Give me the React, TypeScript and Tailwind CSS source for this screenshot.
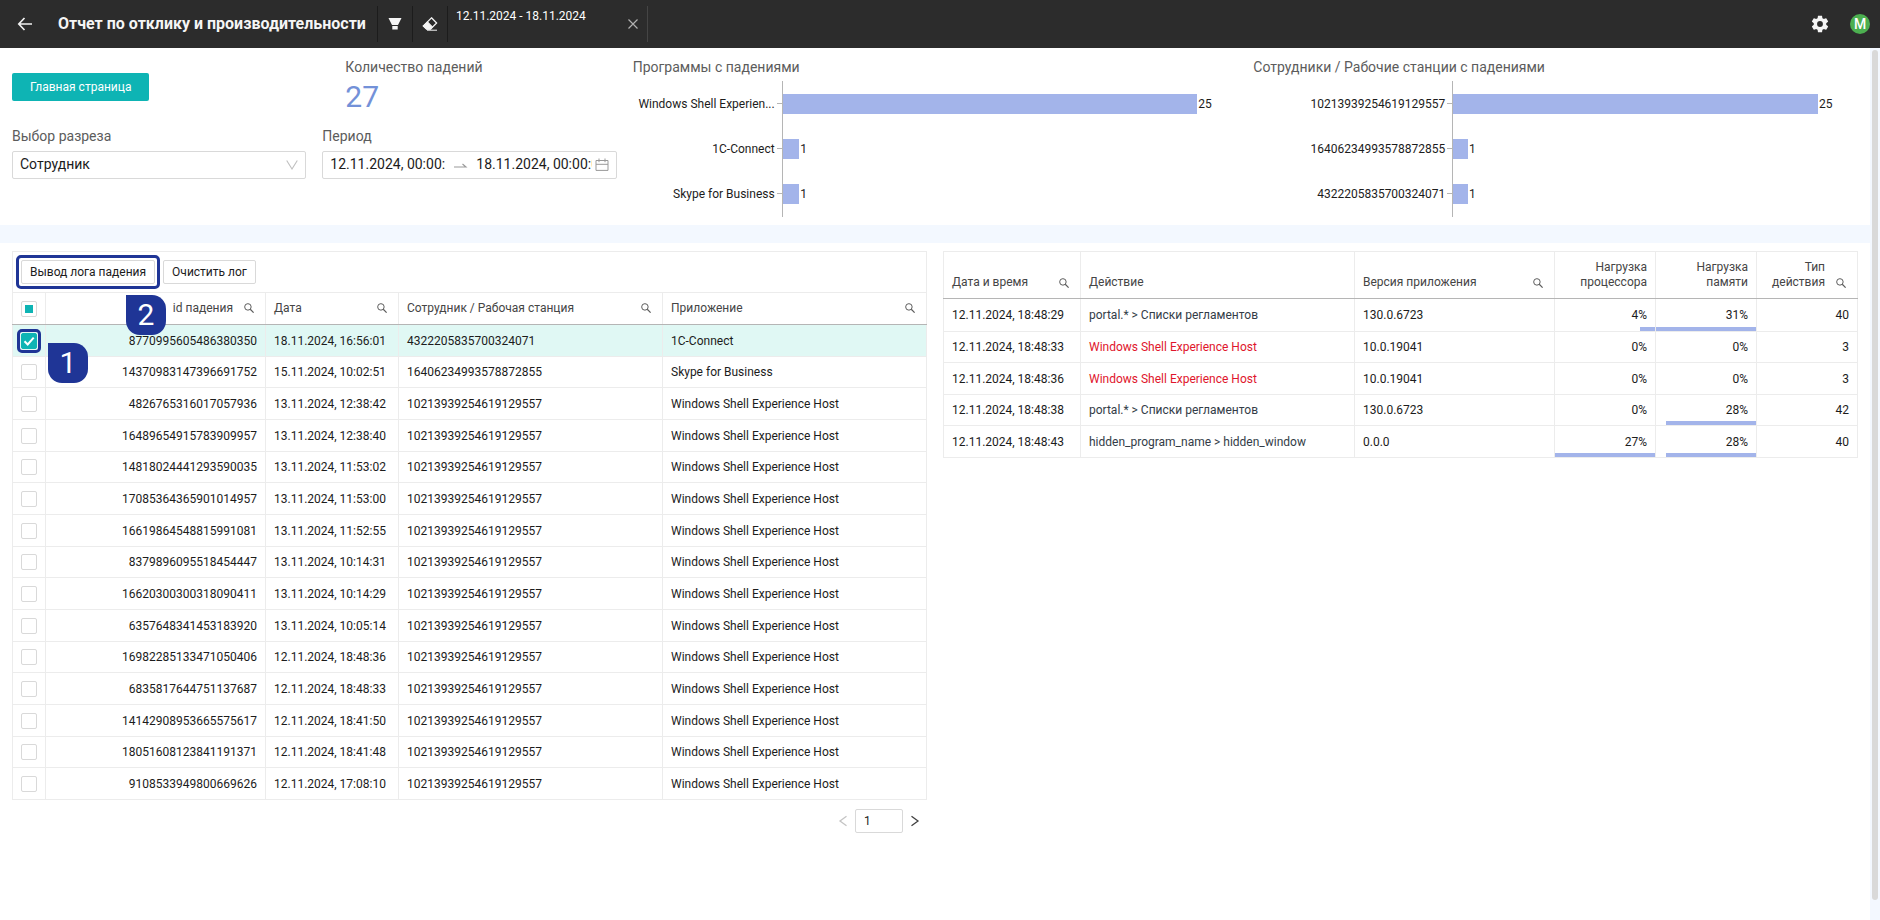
import React from "react";

const crashes = [
  ["8770995605486380350", "18.11.2024, 16:56:01", "4322205835700324071", "1C-Connect"],
  ["14370983147396691752", "15.11.2024, 10:02:51", "16406234993578872855", "Skype for Business"],
  ["4826765316017057936", "13.11.2024, 12:38:42", "10213939254619129557", "Windows Shell Experience Host"],
  ["16489654915783909957", "13.11.2024, 12:38:40", "10213939254619129557", "Windows Shell Experience Host"],
  ["14818024441293590035", "13.11.2024, 11:53:02", "10213939254619129557", "Windows Shell Experience Host"],
  ["17085364365901014957", "13.11.2024, 11:53:00", "10213939254619129557", "Windows Shell Experience Host"],
  ["16619864548815991081", "13.11.2024, 11:52:55", "10213939254619129557", "Windows Shell Experience Host"],
  ["8379896095518454447", "13.11.2024, 10:14:31", "10213939254619129557", "Windows Shell Experience Host"],
  ["16620300300318090411", "13.11.2024, 10:14:29", "10213939254619129557", "Windows Shell Experience Host"],
  ["6357648341453183920", "13.11.2024, 10:05:14", "10213939254619129557", "Windows Shell Experience Host"],
  ["16982285133471050406", "12.11.2024, 18:48:36", "10213939254619129557", "Windows Shell Experience Host"],
  ["6835817644751137687", "12.11.2024, 18:48:33", "10213939254619129557", "Windows Shell Experience Host"],
  ["14142908953665575617", "12.11.2024, 18:41:50", "10213939254619129557", "Windows Shell Experience Host"],
  ["18051608123841191371", "12.11.2024, 18:41:48", "10213939254619129557", "Windows Shell Experience Host"],
  ["9108533949800669626", "12.11.2024, 17:08:10", "10213939254619129557", "Windows Shell Experience Host"],
];

const log = [
  { time: "12.11.2024, 18:48:29", action: "portal.* > Списки регламентов", failed: false, version: "130.0.6723", cpu: 4, mem: 31, type: 40 },
  { time: "12.11.2024, 18:48:33", action: "Windows Shell Experience Host", failed: true, version: "10.0.19041", cpu: 0, mem: 0, type: 3 },
  { time: "12.11.2024, 18:48:36", action: "Windows Shell Experience Host", failed: true, version: "10.0.19041", cpu: 0, mem: 0, type: 3 },
  { time: "12.11.2024, 18:48:38", action: "portal.* > Списки регламентов", failed: false, version: "130.0.6723", cpu: 0, mem: 28, type: 42 },
  { time: "12.11.2024, 18:48:43", action: "hidden_program_name > hidden_window", failed: false, version: "0.0.0", cpu: 27, mem: 28, type: 40 },
];

const programs = [
  { label: "Windows Shell Experien...", value: 25 },
  { label: "1C-Connect", value: 1 },
  { label: "Skype for Business", value: 1 },
];

const employees = [
  { label: "10213939254619129557", value: 25 },
  { label: "16406234993578872855", value: 1 },
  { label: "4322205835700324071", value: 1 },
];

function SearchButton({ name }: { name: string }) {
  return (
    <button type="button" aria-label={`Поиск: ${name}`} className="shrink-0">
      <svg viewBox="0 0 12 12" className="size-2.5 fill-none stroke-[#5c5c5c]">
        <circle cx="4.7" cy="4.7" r="3.9" strokeWidth="1.2" />
        <path d="M7.5 7.5 11.6 11.6" strokeWidth="1.4" />
      </svg>
    </button>
  );
}

function BarChart({ title, data, labelClass }: { title: string; data: { label: string; value: number }[]; labelClass: string }) {
  const max = Math.max(...data.map((d) => d.value));
  return (
    <section className="col-span-2 pt-2">
      <h2 className="text-sm leading-[22px] text-[#5c5c5c]">{title}</h2>
      <div className="mt-[3px] flex h-[136px]">
        <ul className={labelClass}>
          {data.map((d) => (
            <li key={d.label} className="flex h-[45px] items-center justify-end gap-0.5">
              <span className="whitespace-nowrap">{d.label}</span>
              <span className="h-px w-[5px] bg-[#b5b5b5]" />
            </li>
          ))}
        </ul>
        <ul className="flex min-w-0 flex-1 flex-col border-l border-[#b5b5b5] pr-10">
          {data.map((d) => (
            <li key={d.label} className="flex h-[45px] shrink-0 items-center gap-px">
              <span className="h-5 shrink-0 bg-[#a3b4ea]" style={{ width: `${(d.value / max) * 100}%` }} />
              <span>{d.value}</span>
            </li>
          ))}
        </ul>
      </div>
    </section>
  );
}

function Load({ value, max }: { value: number; max: number }) {
  return (
    <td className="relative border border-[#ececec] px-2 text-right">
      {value}%
      {value > 0 && <span className="absolute right-0 bottom-0 h-1 bg-[#a3b4ea]" style={{ width: `${(value / max) * 100}%` }} />}
    </td>
  );
}

function Tick({ checked }: { checked: boolean }) {
  return (
    <span className="relative mx-auto block size-4">
      <input
        type="checkbox"
        defaultChecked={checked}
        aria-label="Выбрать строку"
        className="block size-4 appearance-none rounded-[2px] border border-[#d9d9d9] bg-white checked:border-[#0eb4b4] checked:bg-[#0eb4b4]"
      />
      {checked && (
        <>
          <svg viewBox="0 0 16 16" className="pointer-events-none absolute inset-0 size-4 fill-none stroke-white">
            <path d="m3.5 8.2 3.2 3.3 6-6.8" strokeWidth="2" />
          </svg>
          <span className="pointer-events-none absolute -inset-1 rounded-[5px] border-[3px] border-[#1f3596]" />
        </>
      )}
    </span>
  );
}

export default function App() {
  return (
    <div className="flex min-h-screen flex-col bg-white font-['Roboto',sans-serif] text-xs text-[#1c1c1c]">
      <header className="flex h-12 items-center bg-[#2c2c2c] text-white">
        <button type="button" aria-label="Назад" className="ml-[17px]">
          <svg viewBox="0 0 16 16" className="size-4 fill-none stroke-[#f0f0f0]">
            <path d="M15 8H2M7.5 2 1.8 8l5.7 6" strokeWidth="1.7" />
          </svg>
        </button>
        <h1 className="ml-[25px] w-[319px] shrink-0 text-base font-bold whitespace-nowrap text-[#f5f5f5]">
          Отчет по отклику и производительности
        </h1>
        <button type="button" aria-label="Фильтр" className="flex h-9 w-[35px] items-center justify-center border-l border-[#1c1c1c]">
          <svg viewBox="0 0 14 14" className="size-3.5 fill-[#f5f5f5]">
            <path d="M.5 1h13L10 8H4zM4.3 9h5.4v3.6H4.3z" />
          </svg>
        </button>
        <button type="button" aria-label="Очистить фильтр" className="flex h-9 w-[35px] items-center justify-center border-l border-[#1c1c1c]">
          <svg viewBox="0 0 16 16" className="size-4 fill-none stroke-[#f5f5f5]">
            <path d="M9.5 1.8 14.6 7 8.5 13.2H4.6L1.3 9.9z" strokeWidth="1.3" />
            <path d="M5.5 5.8 10.6 11 8.5 13.2H4.6L1.3 9.9zM5 14.2h10" className="fill-[#f5f5f5]" strokeWidth="1" />
          </svg>
        </button>
        <div className="flex h-9 w-[201px] justify-between border-x border-l-[#1c1c1c] border-r-[#454545] px-2">
          <span className="leading-5">12.11.2024 - 18.11.2024</span>
          <button type="button" aria-label="Удалить период">
            <svg viewBox="0 0 12 12" className="size-3 fill-none stroke-[#b0b0b0]">
              <path d="m1.5 1.5 9 9M10.5 1.5l-9 9" strokeWidth="1.2" />
            </svg>
          </button>
        </div>
        <button type="button" aria-label="Настройки" className="ml-auto">
          <svg viewBox="0 0 24 24" className="size-5 fill-[#f5f5f5]">
            <path d="M19.43 12.98c.04-.32.07-.64.07-.98s-.03-.66-.07-.98l2.11-1.65c.19-.15.24-.42.12-.64l-2-3.46c-.12-.22-.39-.3-.61-.22l-2.49 1c-.52-.4-1.08-.73-1.69-.98l-.38-2.65C14.46 2.18 14.25 2 14 2h-4c-.25 0-.46.18-.49.42l-.38 2.65c-.61.25-1.17.59-1.69.98l-2.49-1c-.23-.09-.49 0-.61.22l-2 3.46c-.13.22-.07.49.12.64l2.11 1.65c-.04.32-.07.65-.07.98s.03.66.07.98l-2.11 1.65c-.19.15-.24.42-.12.64l2 3.46c.12.22.39.3.61.22l2.49-1c.52.4 1.08.73 1.69.98l.38 2.65c.03.24.24.42.49.42h4c.25 0 .46-.18.49-.42l.38-2.65c.61-.25 1.17-.59 1.69-.98l2.49 1c.23.09.49 0 .61-.22l2-3.46c.12-.22.07-.49-.12-.64zM12 15.5a3.5 3.5 0 1 1 0-7 3.5 3.5 0 0 1 0 7z" />
          </svg>
        </button>
        <button type="button" aria-label="Профиль" className="mr-2.5 ml-5 flex size-5 items-center justify-center rounded-full bg-[#4caf50] text-sm font-medium">
          M
        </button>
      </header>

      <div className="flex flex-1">
        <main className="min-w-0 flex-1">
          <div className="grid h-[177px] grid-cols-6 gap-4 px-3">
            <div className="col-span-2 grid grid-cols-2 content-start gap-x-4">
              <div className="pt-[25px]">
                <button type="button" className="h-7 rounded-[2px] bg-[#0eb4b4] px-[18px] text-white">Главная страница</button>
              </div>
              <div className="pt-2 pl-[23px]">
                <h2 className="text-sm leading-[22px] text-[#5c5c5c]">Количество падений</h2>
                <p className="pt-0.5 text-[30px] leading-[34px] text-[#7391d8]">27</p>
              </div>
              <div className="pt-3">
                <label htmlFor="slice" className="block text-sm leading-5 text-[#5c5c5c]">Выбор разреза</label>
                <div className="relative mt-[5px]">
                  <select id="slice" className="block h-7 w-full appearance-none rounded-[2px] border border-[#d9d9d9] bg-white px-[7px] pb-0.5 text-sm leading-5">
                    <option>Сотрудник</option>
                  </select>
                  <svg viewBox="0 0 12 12" className="pointer-events-none absolute top-2 right-2 size-3 fill-none stroke-[#bfbfbf]">
                    <path d="m.7 1.5 5.3 8.5 5.3-8.5" strokeWidth="1.1" />
                  </svg>
                </div>
              </div>
              <div className="pt-3">
                <label htmlFor="from" className="block text-sm leading-5 text-[#5c5c5c]">Период</label>
                <div className="mt-[5px] flex h-7 items-center rounded-[2px] border border-[#d9d9d9] px-[7px] pb-0.5 text-sm">
                  <input id="from" defaultValue="12.11.2024, 00:00:00" className="h-5 w-[115px] min-w-0" />
                  <svg viewBox="0 0 16 16" className="mr-2 ml-[7px] size-4 shrink-0 fill-none stroke-[#999]">
                    <path d="M2 11h12L10.5 8" strokeWidth="1.1" />
                  </svg>
                  <input aria-label="Конец периода" defaultValue="18.11.2024, 00:00:00" className="h-5 w-[115px] min-w-0 flex-1" />
                  <svg viewBox="0 0 14 14" className="ml-[3px] size-3.5 shrink-0 fill-none stroke-[#999]">
                    <path d="M1 3.5h12v9.9H1zM1 7.3h12M4 1.5v3.7M10 1.5v3.7" />
                  </svg>
                </div>
              </div>
            </div>
            <BarChart title="Программы с падениями" data={programs} labelClass="flex w-[149px] shrink-0 flex-col" />
            <BarChart title="Сотрудники / Рабочие станции с падениями" data={employees} labelClass="flex w-[199px] shrink-0 flex-col" />
          </div>

          <div className="h-[18px] bg-[#f3f8ff]" />

          <div className="grid grid-cols-2 items-start gap-4 px-3 pt-2">
            <section className="relative">
              <div className="flex h-[41px] items-center gap-2 border border-b-0 border-[#ececec] px-2">
                <div className="relative">
                  <button type="button" className="block h-6 rounded-[2px] border border-[#d9d9d9] px-2">Вывод лога падения</button>
                  <span className="pointer-events-none absolute -inset-[5px] rounded-[5px] border-[3px] border-[#1f3596]" />
                </div>
                <button type="button" className="h-6 rounded-[2px] border border-[#d9d9d9] px-2">Очистить лог</button>
              </div>
              <table className="w-full table-fixed border-collapse">
                <colgroup>
                  <col className="w-[33px]" />
                  <col className="w-[220px]" />
                  <col className="w-[133px]" />
                  <col className="w-[264px]" />
                  <col className="w-[264px]" />
                </colgroup>
                <thead>
                  <tr className="h-8 text-[#454545]">
                    <th className="border border-b-[#b5b5b5] border-[#ececec] p-0">
                      <span className="relative mx-auto block size-4">
                        <input type="checkbox" aria-label="Выбрать все" className="block size-4 appearance-none rounded-[2px] border border-[#d9d9d9] bg-white" />
                        <span className="pointer-events-none absolute inset-1 bg-[#0eb4b4]" />
                      </span>
                    </th>
                    {["id падения", "Дата", "Сотрудник / Рабочая станция", "Приложение"].map((name, i) => (
                      <th key={name} className="border border-b-[#b5b5b5] border-[#ececec] pr-[11px] pb-0.5 pl-2 font-normal">
                        <div className={i === 0 ? "flex items-center justify-end gap-[11px]" : "flex items-center justify-between"}>
                          <span>{name}</span>
                          <SearchButton name={name} />
                        </div>
                      </th>
                    ))}
                  </tr>
                </thead>
                <tbody>
                  {crashes.map((row, i) => (
                    <tr key={row[0]} className={i === 0 ? "h-8 bg-[#e0f8f4]" : "h-8 nth-[3n+2]:h-[31px]"}>
                      <td className="border border-[#ececec] p-0">
                        <Tick checked={i === 0} />
                      </td>
                      <td className="border border-[#ececec] px-2 text-right">{row[0]}</td>
                      <td className="border border-[#ececec] px-2">{row[1]}</td>
                      <td className="border border-[#ececec] px-2">{row[2]}</td>
                      <td className="border border-[#ececec] px-2">{row[3]}</td>
                    </tr>
                  ))}
                </tbody>
              </table>
              <nav aria-label="Страницы" className="mt-[9px] flex h-6 items-center justify-end gap-1.5 pr-1.5">
                <button type="button" aria-label="Предыдущая" disabled>
                  <svg viewBox="0 0 12 12" className="size-3 fill-none stroke-[#c4c4c4]">
                    <path d="M9.5 1.2 3 6l6.5 4.8" strokeWidth="1.3" />
                  </svg>
                </button>
                <input aria-label="Страница" defaultValue="1" className="h-6 w-12 rounded-[2px] border border-[#d9d9d9] px-2" />
                <button type="button" aria-label="Следующая">
                  <svg viewBox="0 0 12 12" className="size-3 fill-none stroke-[#404040]">
                    <path d="M2.5 1.2 9 6l-6.5 4.8" strokeWidth="1.3" />
                  </svg>
                </button>
              </nav>
              <span className="absolute top-[44px] left-[114px] flex size-10 items-center justify-center rounded-[14px] rounded-tl-none bg-[#1f3596] text-[30px] text-white">2</span>
              <span className="absolute top-[92px] left-9 flex size-10 items-center justify-center rounded-[14px] rounded-tl-none bg-[#1f3596] text-[30px] text-white">1</span>
            </section>

            <table className="w-full table-fixed border-collapse">
              <colgroup>
                <col className="w-[137px]" />
                <col className="w-[274px]" />
                <col className="w-[200px]" />
                <col className="w-[101px]" />
                <col className="w-[101px]" />
                <col className="w-[101px]" />
              </colgroup>
              <thead>
                <tr className="h-[47px] text-left align-bottom leading-[15px] text-[#454545]">
                  <th className="border border-b-[#b5b5b5] border-[#ececec] pr-[11px] pb-2 pl-2 font-normal">
                    <div className="flex items-center justify-between">
                      Дата и время <SearchButton name="Дата и время" />
                    </div>
                  </th>
                  <th className="border border-b-[#b5b5b5] border-[#ececec] px-2 pb-2 font-normal">Действие</th>
                  <th className="border border-b-[#b5b5b5] border-[#ececec] pr-[11px] pb-2 pl-2 font-normal">
                    <div className="flex items-center justify-between">
                      Версия приложения <SearchButton name="Версия приложения" />
                    </div>
                  </th>
                  <th className="border border-b-[#b5b5b5] border-[#ececec] px-2 pb-2 text-right font-normal">Нагрузка процессора</th>
                  <th className="border border-b-[#b5b5b5] border-[#ececec] px-2 pb-2 text-right font-normal">Нагрузка памяти</th>
                  <th className="border border-b-[#b5b5b5] border-[#ececec] pr-[11px] pb-2 pl-2 text-right font-normal">
                    <div className="flex items-end justify-end gap-[11px]">
                      <span>Тип действия</span>
                      <span className="flex h-[15px] items-center">
                        <SearchButton name="Тип действия" />
                      </span>
                    </div>
                  </th>
                </tr>
              </thead>
              <tbody>
                {log.map((r) => (
                  <tr key={r.time} className="h-8 first:h-[33px] even:h-[31px]">
                    <td className="border border-[#ececec] px-2">{r.time}</td>
                    <td className={r.failed ? "border border-[#ececec] px-2 text-[#e0152c]" : "border border-[#ececec] px-2 text-[#333c47]"}>{r.action}</td>
                    <td className="border border-[#ececec] px-2">{r.version}</td>
                    <Load value={r.cpu} max={27} />
                    <Load value={r.mem} max={31} />
                    <td className="border border-[#ececec] px-2 text-right">{r.type}</td>
                  </tr>
                ))}
              </tbody>
            </table>
          </div>
        </main>
        <div aria-hidden="true" className="flex w-2.5 flex-col bg-[#f3f8ff] px-0.5 pt-0.5">
          <span className="h-[850px] rounded-full bg-[#d9d9d9]" />
        </div>
      </div>
    </div>
  );
}
